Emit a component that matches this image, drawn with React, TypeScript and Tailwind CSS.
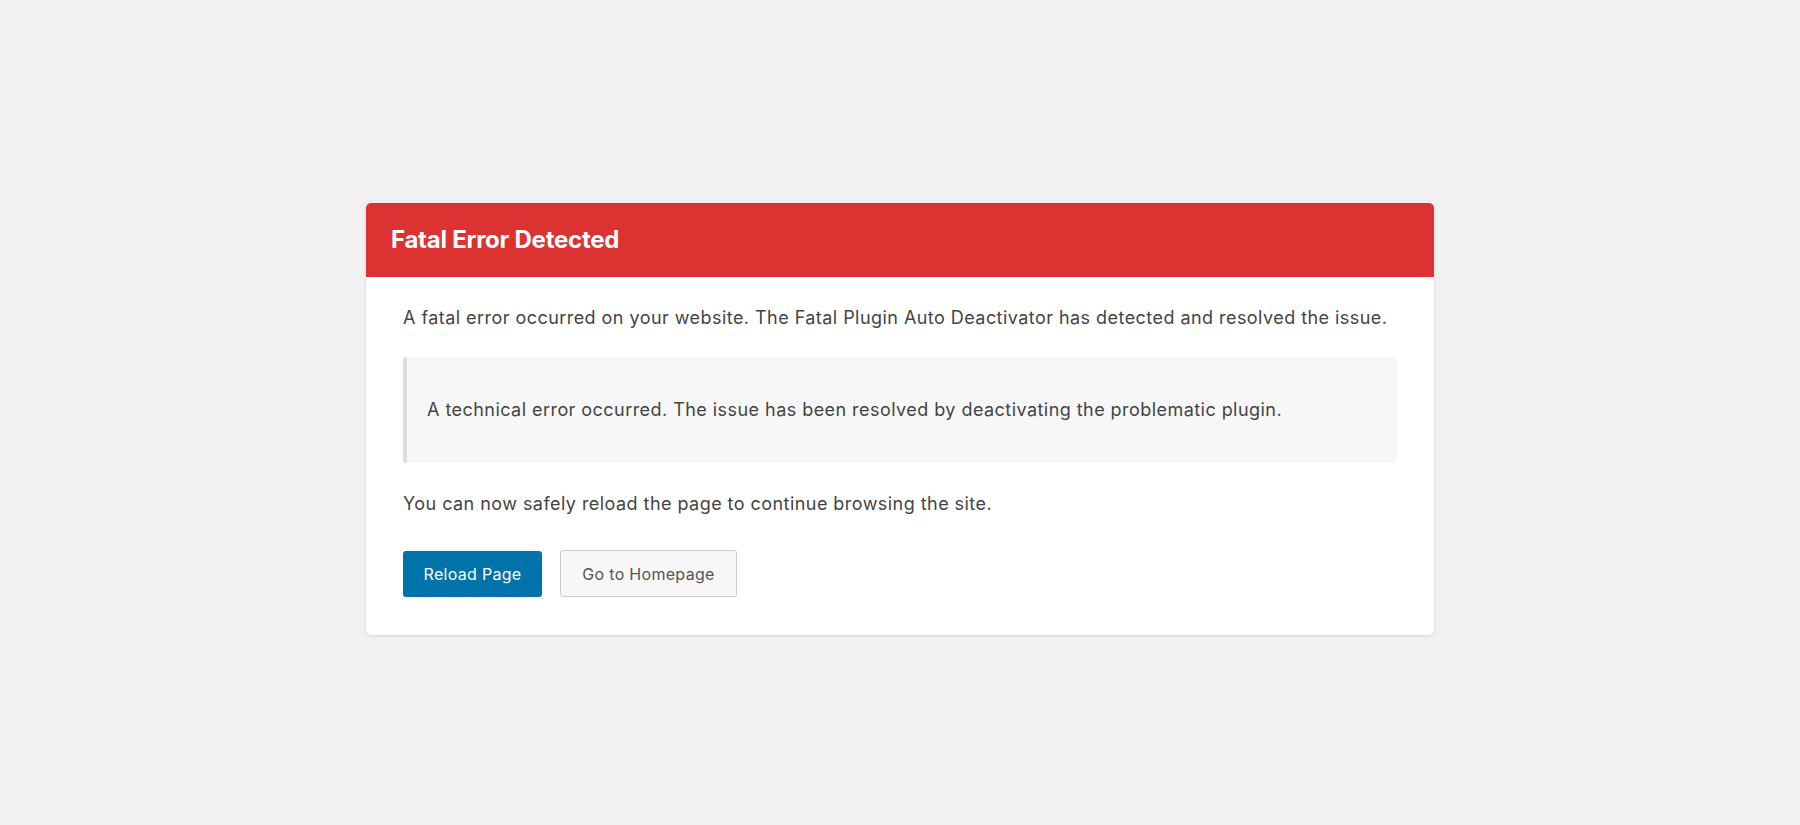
export default function App() {
  return (
    <div className="min-h-[825px] bg-[#f1f1f1] pt-[203px] font-['Inter',sans-serif] text-[#444]">
      <div className="mx-auto w-[1068px] overflow-hidden rounded-[5px] bg-white shadow-[0_1px_3px_rgba(0,0,0,0.13)]">
        <div className="flex h-[74px] items-center bg-[#dc3232] px-[25px]">
          <h1 className="text-[24px] font-bold leading-none tracking-[-0.25px] text-white">Fatal Error Detected</h1>
        </div>
        <div className="px-[37px] pb-[38px] pt-[27px] text-[18px] tracking-[0.45px]">
          <p className="leading-[27px]">
            A fatal error occurred on your website. The Fatal Plugin Auto Deactivator has detected and resolved the
            issue.
          </p>
          <blockquote className="mt-[26px] rounded-[3px] border-l-4 border-[#dddddd] bg-[#f7f7f7] px-5 py-[39px] leading-[28px]">
            A technical error occurred. The issue has been resolved by deactivating the problematic plugin.
          </blockquote>
          <p className="mt-[27px] leading-[27px]">
            You can now safely reload the page to continue browsing the site.
          </p>
          <div className="mt-[33px] flex items-center gap-[18px] text-[16px] tracking-[0.3px]">
            <button className="h-[46px] w-[139px] rounded-[3px] bg-[#0073aa] text-white">
              Reload Page
            </button>
            <button className="h-[47px] w-[177px] rounded-[3px] border border-[#cccccc] bg-[#f7f7f7] text-[#555]">
              Go to Homepage
            </button>
          </div>
        </div>
      </div>
    </div>
  );
}
